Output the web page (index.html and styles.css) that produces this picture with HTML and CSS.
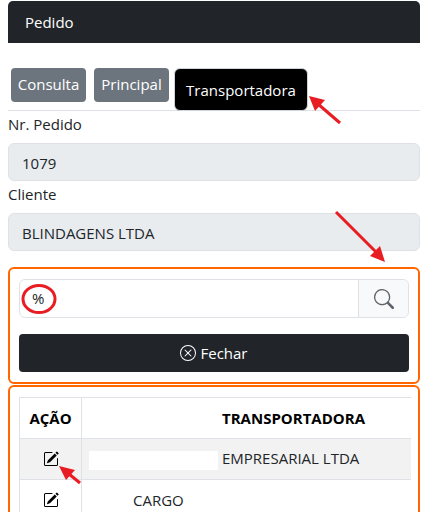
FILE: index.html
```html
<!DOCTYPE html>
<html lang="en">

<head>
    <meta charset="UTF-8">
    <meta name="viewport" content="width=device-width, initial-scale=1.0">
    <title>Pedido</title>
    <link rel="stylesheet" href="styles.css">
</head>

<body>

    <div class="card-header">Pedido</div>

    <div class="tabs">
        <div class="tab">Consulta</div>
        <div class="tab">Principal</div>
        <div class="tab active">Transportadora</div>
    </div>

    <label class="field-label">Nr. Pedido</label>
    <div class="field">1079</div>
    <label class="field-label second">Cliente</label>
    <div class="field">BLINDAGENS LTDA</div>

    <div class="box search-box">
        <div class="input-group">
            <div class="search-input">%</div>
            <div class="search-button">
                <svg width="20" height="20" viewBox="0 0 16 16" fill="#5c636a">
                    <path d="M11.742 10.344a6.5 6.5 0 1 0-1.397 1.398h-.001c.03.04.062.078.098.115l3.85 3.85a1 1 0 0 0 1.415-1.414l-3.85-3.85a1.007 1.007 0 0 0-.115-.1zM12 6.5a5.5 5.5 0 1 1-11 0 5.5 5.5 0 0 1 11 0z"/>
                </svg>
            </div>
        </div>
        <div class="close-button">
            <svg width="16" height="16" viewBox="0 0 16 16" fill="#fff">
                <path d="M8 15A7 7 0 1 1 8 1a7 7 0 0 1 0 14zm0 1A8 8 0 1 0 8 0a8 8 0 0 0 0 16z"/>
                <path d="M4.646 4.646a.5.5 0 0 1 .708 0L8 7.293l2.646-2.647a.5.5 0 0 1 .708.708L8.707 8l2.647 2.646a.5.5 0 0 1-.708.708L8 8.707l-2.646 2.647a.5.5 0 0 1-.708-.708L7.293 8 4.646 5.354a.5.5 0 0 1 0-.708z"/>
            </svg>
            Fechar
        </div>
    </div>

    <div class="box table-box">
        <table>
            <thead>
                <tr>
                    <th class="col-action">AÇÃO</th>
                    <th class="col-name">TRANSPORTADORA</th>
                </tr>
            </thead>
            <tbody>
                <tr class="striped">
                    <td class="col-action">
                        <svg class="edit-icon" width="16" height="16" viewBox="0 0 16 16" fill="#000">
                            <path d="M15.502 1.94a.5.5 0 0 1 0 .706L14.459 3.69l-2-2L13.502.646a.5.5 0 0 1 .707 0l1.293 1.293zm-1.75 2.456-2-2L4.939 9.21a.5.5 0 0 0-.121.196l-.805 2.414a.25.25 0 0 0 .316.316l2.414-.805a.5.5 0 0 0 .196-.12l6.813-6.814z"/>
                            <path fill-rule="evenodd" d="M1 13.5A1.5 1.5 0 0 0 2.5 15h11a1.5 1.5 0 0 0 1.5-1.5v-6a.5.5 0 0 0-1 0v6a.5.5 0 0 1-.5.5h-11a.5.5 0 0 1-.5-.5v-11a.5.5 0 0 1 .5-.5H9a.5.5 0 0 0 0-1H2.5A1.5 1.5 0 0 0 1 2.5v11z"/>
                        </svg>
                    </td>
                    <td class="col-name"><span class="redacted"></span>EMPRESARIAL LTDA</td>
                </tr>
                <tr>
                    <td class="col-action">
                        <svg class="edit-icon" width="16" height="16" viewBox="0 0 16 16" fill="#000">
                            <path d="M15.502 1.94a.5.5 0 0 1 0 .706L14.459 3.69l-2-2L13.502.646a.5.5 0 0 1 .707 0l1.293 1.293zm-1.75 2.456-2-2L4.939 9.21a.5.5 0 0 0-.121.196l-.805 2.414a.25.25 0 0 0 .316.316l2.414-.805a.5.5 0 0 0 .196-.12l6.813-6.814z"/>
                            <path fill-rule="evenodd" d="M1 13.5A1.5 1.5 0 0 0 2.5 15h11a1.5 1.5 0 0 0 1.5-1.5v-6a.5.5 0 0 0-1 0v6a.5.5 0 0 1-.5.5h-11a.5.5 0 0 1-.5-.5v-11a.5.5 0 0 1 .5-.5H9a.5.5 0 0 0 0-1H2.5A1.5 1.5 0 0 0 1 2.5v11z"/>
                        </svg>
                    </td>
                    <td class="col-name cargo">CARGO</td>
                </tr>
            </tbody>
        </table>
    </div>

    <!-- red marks drawn over the screenshot -->
    <svg class="marks" width="427" height="512" viewBox="0 0 427 512">
        <g stroke="#e81c23" stroke-width="3" fill="none">
            <line x1="340" y1="123" x2="318" y2="104"/>
            <line x1="336" y1="212" x2="376" y2="252"/>
            <line x1="80" y1="483" x2="69" y2="474"/>
            <ellipse cx="39" cy="299" rx="16" ry="13.5"/>
        </g>
        <g fill="#e81c23">
            <polygon points="309,96 325,100 315,111"/>
            <polygon points="385,262 370,256 380,246"/>
            <polygon points="59,466 75,470 66,480"/>
        </g>
    </svg>

</body>

</html>
```

FILE: styles.css
```css
* {
    box-sizing: border-box;
}

html, body {
    overflow: hidden;
}

body {
    margin: 0;
    height: 512px;
    padding: 1px 7px 0 8px;
    font-family: 'Open Sans', 'Noto Sans', sans-serif;
    font-size: 15px;
    color: #212529;
    background-color: #fff;
}

.card-header {
    height: 42px;
    padding: 0 17px;
    line-height: 42px;
    color: #fff;
    background-color: #212529;
    border-radius: 5px 5px 0 0;
}

.tabs {
    display: flex;
    align-items: flex-start;
    height: 68px;
    padding: 25px 0 0 3px;
    border-bottom: 1px solid #dee2e6;
}

.tab {
    height: 34px;
    width: 75px;
    margin-right: 8px;
    text-align: center;
    line-height: 33px;
    color: #fff;
    background-color: #6c757d;
    border-radius: 4px;
}

.tab.active {
    width: 134px;
    height: 43px;
    margin-left: -3px;
    line-height: 43px;
    background-color: #000;
    border: 1px solid #ced4da;
    border-radius: 6px;
}

.field-label {
    display: block;
    height: 32px;
    padding-top: 2px;
    line-height: 22px;
}

.field-label.second {
    height: 32px;
    padding-top: 2px;
    margin-top: 0;
}

.field {
    height: 38px;
    padding: 0 13px;
    line-height: 38px;
    background-color: #e9ecef;
    border: 1px solid #dee2e6;
    border-radius: 6px;
}

.box {
    border: 2px solid #ff6600;
    border-radius: 6px;
}

.search-box {
    height: 117px;
    margin-top: 16px;
    padding: 10px 9px;
}

.input-group {
    display: flex;
    height: 39px;
    border: 1px solid #dee2e6;
    border-radius: 6px;
}

.search-input {
    flex: 1;
    padding-left: 12px;
    line-height: 37px;
    color: #212529;
}

.search-button {
    display: flex;
    width: 50px;
    align-items: center;
    justify-content: center;
    background-color: #f8f9fa;
    border-left: 1px solid #dee2e6;
    border-radius: 0 6px 6px 0;
}

.close-button {
    display: flex;
    height: 38px;
    margin-top: 16px;
    align-items: center;
    justify-content: center;
    gap: 4px;
    color: #fff;
    background-color: #212529;
    border-radius: 4px;
}

.table-box {
    height: 140px;
    margin-top: 1px;
    padding: 10px 0 0 9px;
    border-radius: 6px 6px 0 0;
}

table {
    width: 392px;
    border-collapse: collapse;
    table-layout: fixed;
}

th, td {
    height: 41px;
    padding: 0;
    border: 1px solid #dee2e6;
    border-right: none;
}

th {
    color: #000;
    font-weight: 700;
}

td {
    color: #212529;
}

.col-action {
    width: 62px;
    text-align: center;
}

th.col-name {
    padding-left: 140px;
    text-align: left;
}

td.col-name {
    padding-left: 7px;
}

td.cargo {
    padding-left: 51px;
}

.striped td {
    background-color: #f2f2f2;
}

.redacted {
    display: inline-block;
    width: 129px;
    height: 19px;
    margin-right: 4px;
    vertical-align: middle;
    background-color: #fff;
}

.edit-icon {
    display: block;
    margin: 0 auto;
}

.marks {
    position: absolute;
    top: 0;
    left: 0;
    pointer-events: none;
}
```
